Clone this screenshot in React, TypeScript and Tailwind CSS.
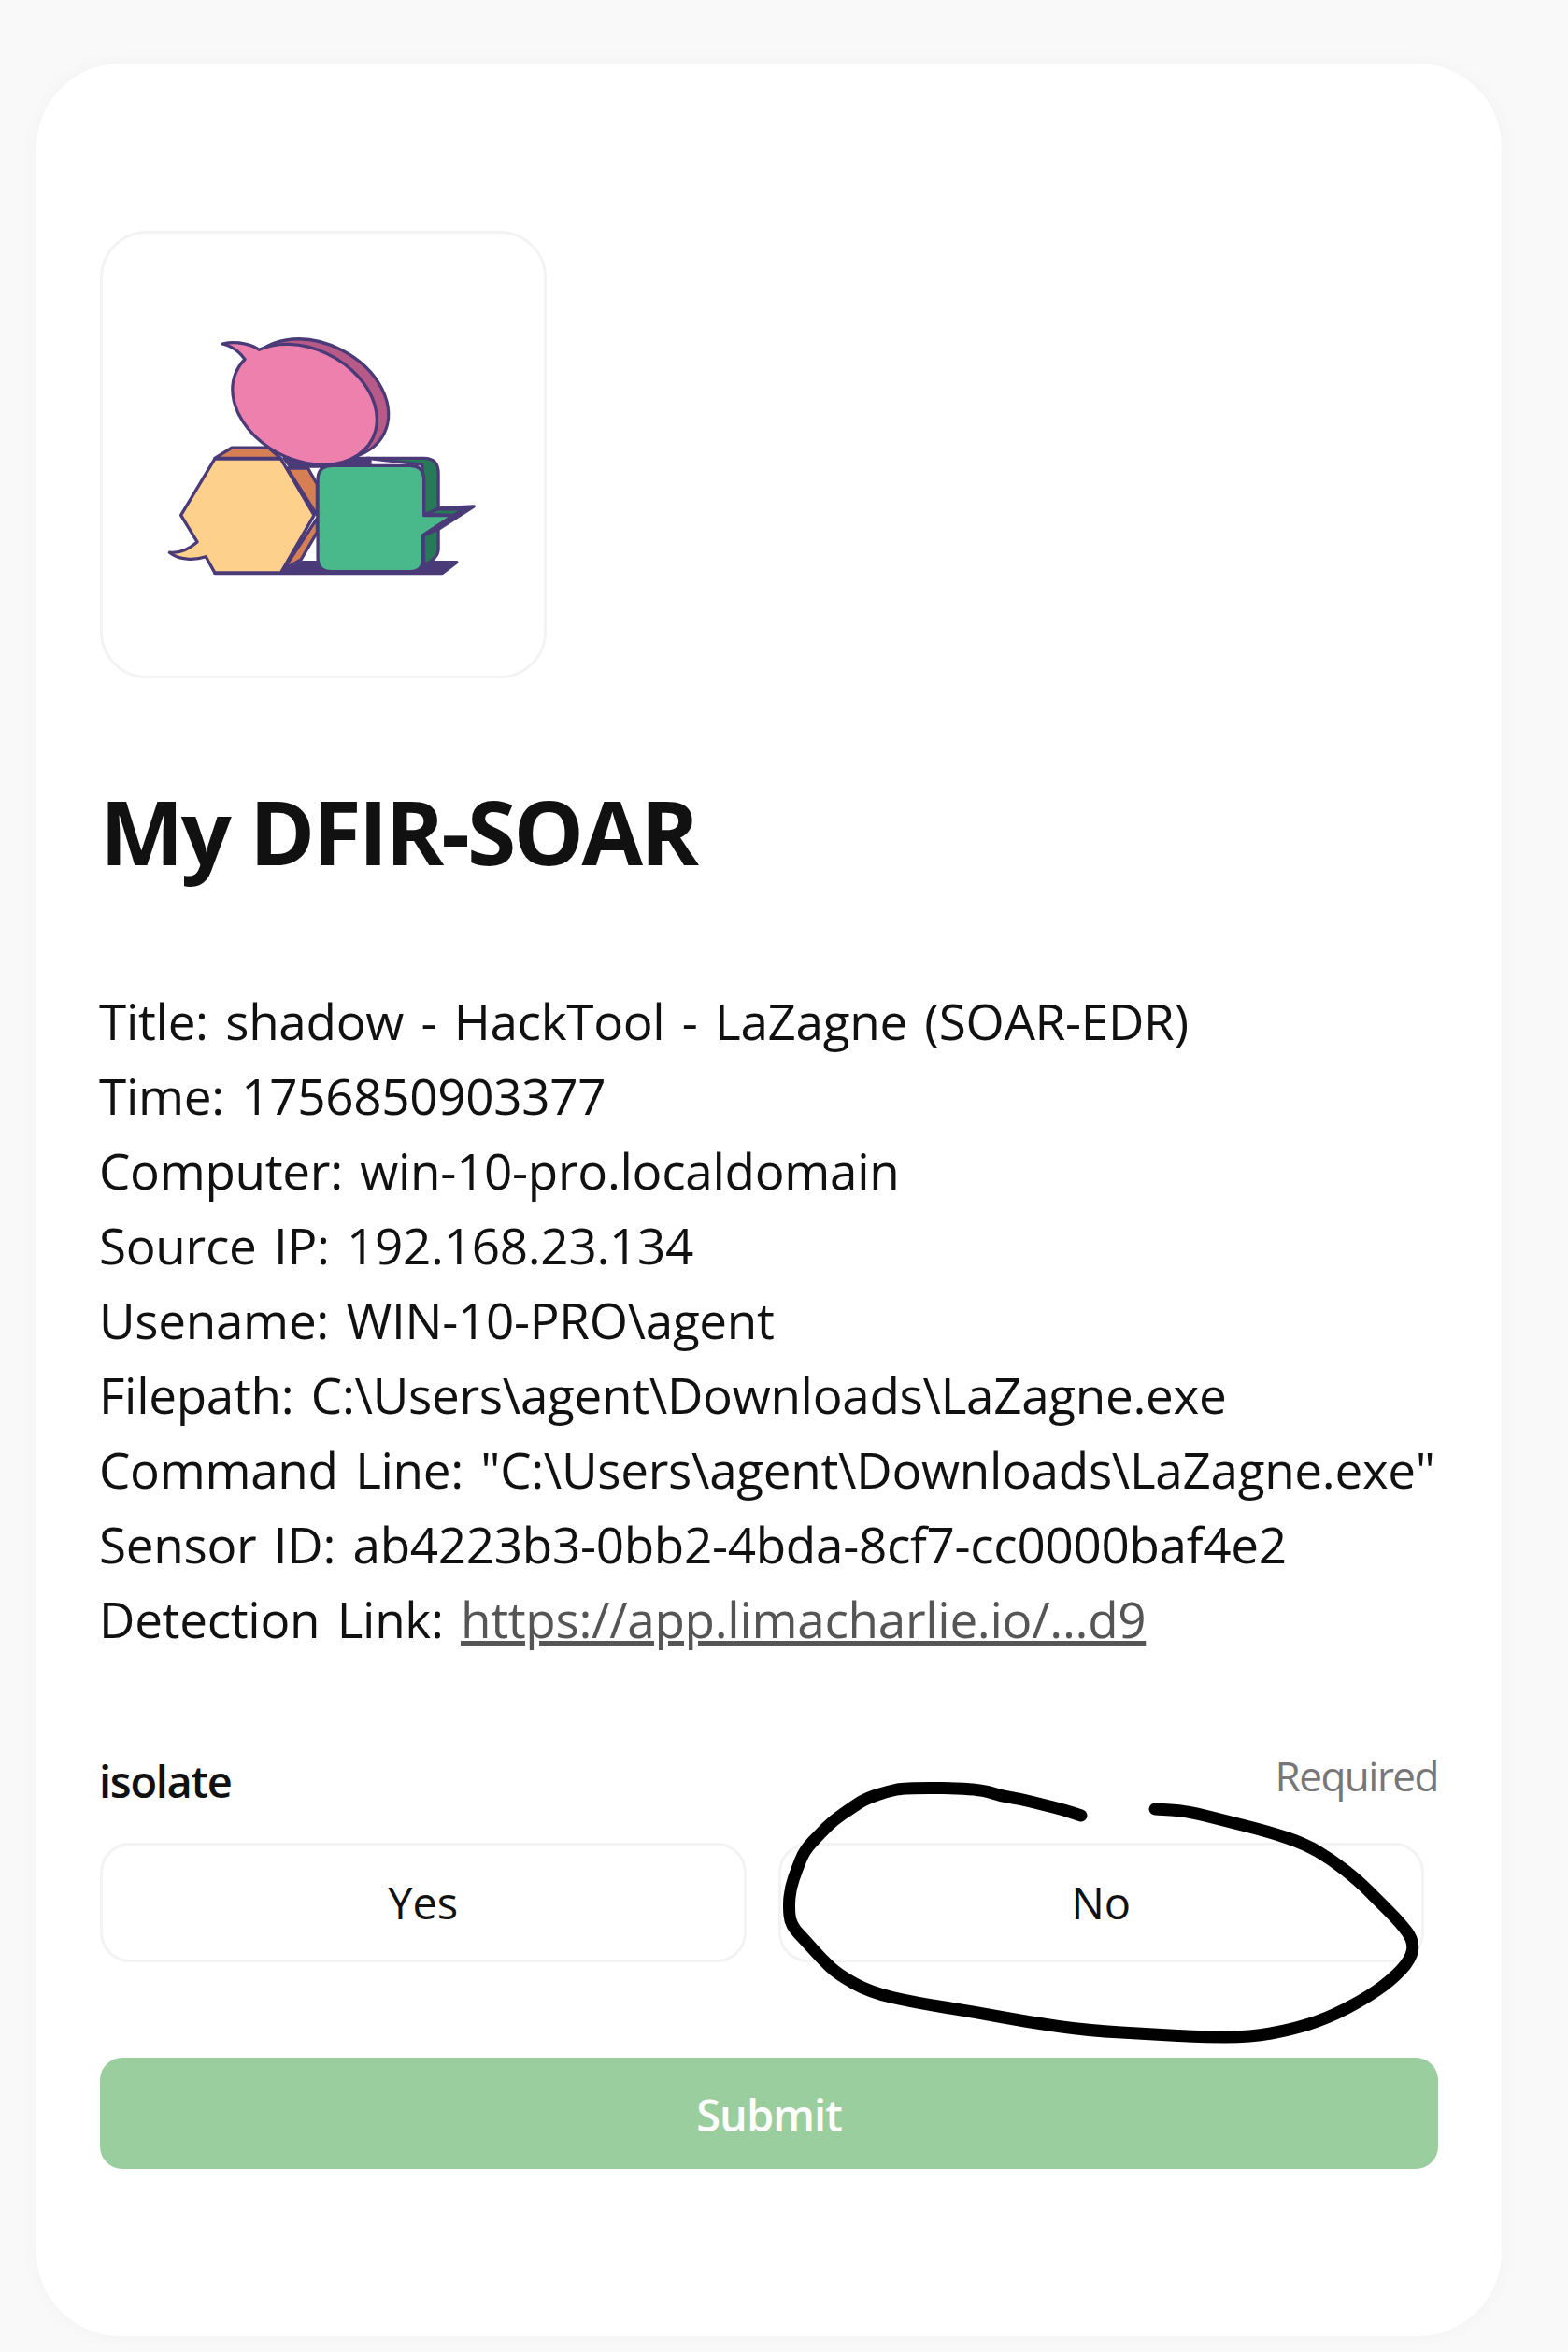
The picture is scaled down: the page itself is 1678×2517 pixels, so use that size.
import React from 'react';

const fontStack = { fontFamily: '"Open Sans", "Noto Sans", sans-serif' };

const detailLines = [
  'Title: shadow - HackTool - LaZagne (SOAR-EDR)',
  'Time: 1756850903377',
  'Computer: win-10-pro.localdomain',
  'Source IP: 192.168.23.134',
  'Usename: WIN-10-PRO\\agent',
  'Filepath: C:\\Users\\agent\\Downloads\\LaZagne.exe',
  'Command Line: "C:\\Users\\agent\\Downloads\\LaZagne.exe"',
  'Sensor ID: ab4223b3-0bb2-4bda-8cf7-cc0000baf4e2',
];

// hand drawn circle around the "No" button, in page pixels
const scribble = [
  [1157, 1943], [1139, 1937], [1115, 1931], [1091, 1925], [1071, 1922], [1047, 1914], [970, 1913], [950, 1917],
  [926, 1925], [911, 1935], [892, 1948], [878, 1962], [861, 1980], [853, 2000], [846, 2020], [844, 2040],
  [846, 2060], [863, 2078], [880, 2097], [897, 2113], [931, 2132], [979, 2143], [1042, 2153], [1101, 2164],
  [1164, 2173], [1236, 2177], [1285, 2180], [1338, 2180], [1382, 2172], [1420, 2160], [1459, 2140], [1488, 2120],
  [1510, 2097], [1513, 2077], [1498, 2057], [1474, 2033], [1454, 2013], [1425, 1990], [1396, 1973], [1357, 1960],
  [1309, 1948], [1270, 1938], [1236, 1936],
];

// smooth through midpoints so the line doesn't look polygonal
const scribblePath = scribble.reduce((d, [x, y], i) => {
  if (i === 0) return `M${x} ${y}`;
  const [px, py] = scribble[i - 1];
  return `${d} Q${px} ${py} ${(px + x) / 2} ${(py + y) / 2}`;
}, '') + ` L${scribble[scribble.length - 1].join(' ')}`;

const Logo = () => (
  <svg viewBox="51 51 1434 1434" className="w-full h-full">
    <g stroke="#4a3b78" strokeWidth="10" strokeLinejoin="round">
      {/* dark floor */}
      <path d="M640 1150 L700 1118 L1202 1118 L1155 1154 L415 1154 Z" fill="#4a3b78" />
      {/* hexagon depth */}
      <path d="M415 780 L470 746 L590 746 L630 780 Z" fill="#d67f55" />
      <path d="M650 812 L718 812 L748 865 L748 965 Z" fill="#d67f55" />
      <path d="M748 975 L748 1020 L695 1110 L640 1140 Z" fill="#d67f55" />
      <path d="M640 780 L920 780 L920 806 L660 806 Z" fill="#4a3b78" />
      {/* hexagon */}
      <path d="M415 782 L630 782 L738 965 L630 1152 L415 1152 L386 1100 C350 1112 300 1112 268 1086 C305 1090 335 1072 358 1052 L305 965 Z" fill="#fdd08c" />
      {/* square depth */}
      <path d="M910 780 L1095 780 Q1142 780 1142 830 L1142 1075 Q1142 1105 1095 1128 L1090 800 Z" fill="#267a58" />
      <path d="M1095 970 L1142 942 L1258 936 L1140 1012 L1095 1030 Z" fill="#4a3b78" />
      <path d="M1100 962 L1140 945 L1228 945 L1190 965 Z" fill="#267a58" />
      {/* square */}
      <path d="M795 804 L1050 804 Q1095 804 1095 850 L1095 966 L1190 966 L1092 1030 L1092 1105 Q1092 1148 1050 1148 L795 1148 Q750 1148 750 1105 L750 850 Q750 804 795 804 Z" fill="#49b88a" />
      {/* bubble depth */}
      <ellipse cx="745" cy="588" rx="247" ry="180" transform="rotate(27 745 588)" fill="#b85a88" />
      {/* bubble */}
      <path d="M559 427 C540 412 490 396 440 408 C475 416 497 436 513 458 A247 180 27 1 0 559 427 Z" fill="#ed80ad" />
    </g>
  </svg>
);

const ChoiceButton = ({ label }: { label: string }) => (
  <button className="h-[128px] rounded-[32px] border-[3px] border-[#f3f3f3] bg-white text-[#111] text-[47px]">
    {label}
  </button>
);

export default function App() {
  return (
    <div className="relative w-[1678px] h-[2517px] bg-[#f9f9f9] pt-[68px] pl-[39px] overflow-hidden text-[#111]" style={fontStack}>
      <div className="w-[1568px] h-[2432px] bg-white rounded-[90px] px-[68px] pt-[179px] shadow-[0_0_24px_rgba(0,0,0,0.03)]">
        <div className="w-[478px] h-[479px] rounded-[50px] border-[3px] border-[#f3f3f3] bg-white overflow-hidden">
          <Logo />
        </div>

        <h1 className="mt-[108px] text-[95px] leading-[110px] font-bold tracking-[-2.8px] text-[#111]">My DFIR-SOAR</h1>

        <div className="mt-[109px] -ml-[1px] text-[53px] leading-[80px] text-[#111] tracking-[-0.3px] [word-spacing:5px]">
          {detailLines.map(line => (
            <div key={line} className="whitespace-nowrap">{line}</div>
          ))}
          <div className="whitespace-nowrap">
            Detection Link: <a className="underline text-[#555]">https://app.limacharlie.io/...d9</a>
          </div>
        </div>

        <div className="mt-[98px] flex items-start justify-between">
          <span className="-ml-[1px] text-[47px] leading-[70px] font-semibold tracking-[-1.3px]">isolate</span>
          <span className="text-[44px] leading-[58px] text-[#777] tracking-[-1.5px]">Required</span>
        </div>

        <div className="mt-[31px] grid grid-cols-2 gap-[34px] pr-[15px]">
          <ChoiceButton label="Yes" />
          <ChoiceButton label="No" />
        </div>

        <button className="mt-[102px] w-full h-[119px] pt-[4px] rounded-[24px] bg-[#9bce9e] text-white text-[47px] font-semibold tracking-[-1px]">
          Submit
        </button>
      </div>

      <svg className="absolute inset-0 w-[1678px] h-[2517px] pointer-events-none" viewBox="0 0 1678 2517">
        <path d={scribblePath} fill="none" stroke="#000" strokeWidth="13" strokeLinecap="round" strokeLinejoin="round" />
      </svg>
    </div>
  );
}
